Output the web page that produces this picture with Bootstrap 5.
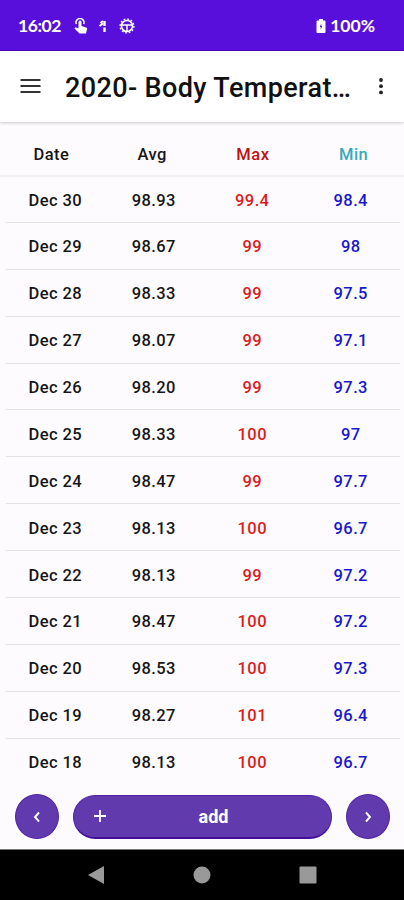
<!DOCTYPE html>
<html lang="en">
<head>
<meta charset="utf-8">
<meta name="viewport" content="width=device-width, initial-scale=1">
<title>2020- Body Temperature</title>
<link href="https://cdn.jsdelivr.net/npm/bootstrap@5.3.0/dist/css/bootstrap.min.css" rel="stylesheet">
<style>
body { font-family: Roboto, "Noto Sans", sans-serif; background: #fefbff; color: #161616; }
.screen { height: 900px; }
svg { display: block; flex: none; }
.status { height: 51px; background: #590fdc; border-bottom: 1px solid #4d07c2; font: 700 17.5px/1 Lato, sans-serif; padding: 2px 29px 0 18px; }
.status .clock { width: 56px; letter-spacing: -.4px; }
.appbar { height: 71px; padding: 0 16px 0 20px; box-shadow: 0 1px 3px rgba(0,0,0,.2); z-index: 1; }
.appbar h1 { font-size: 27px; font-weight: 500; line-height: 36px; width: 292px; margin-left: 24px; padding-top: 2px; letter-spacing: .38px; color: #111; }
.appbar svg { position: relative; top: -1px; }
.heads { height: 55px; padding: 13px 0 0 1px; border-bottom: 2px solid #f2eff3; font-size: 16.5px; font-weight: 500; letter-spacing: .5px; }
.readings { height: 609.3px; margin: -1px 4px 0 6px; font-size: 16.5px; font-weight: 500; letter-spacing: .4px; }
.reading { flex: 1 1 0; border-bottom: 1.5px solid #e5e2e6; padding-top: 4px; }
.reading:last-child { border-color: transparent; }
.high { color: #dc1c1c; } .low { color: #1717cf; }
.head-high { color: #bd1212; } .head-low { color: #38a9bf; }
.actions { padding: 0 14px 1px 15px; flex: 1; }
.fill { background: #613bae; color: #fff; }
.fill:hover { background: #57339e; color: #fff; }
.round { width: 44px; height: 45px; border: 1px solid #5022a6; }
.add { width: 259px; height: 44px; border: 1px solid #5022a6; border-bottom: 2px solid #430f99; font-size: 18px; font-weight: 700; padding: 0 19px; }
.sysbar { height: 51px; background: #000; border-top: 1px solid #777; padding: 0 87px 0 87px; }
</style>
</head>
<body>
<div class="screen d-flex flex-column overflow-hidden">
  <div class="status d-flex align-items-center text-white">
    <span class="clock">16:02</span>
    <svg width="14" height="16" viewBox="0 0 14 16" fill="#fff"><path d="M4.500 4a1.500 1.500 0 0 1 3 0v4l4.700 1.500c.8.3 1 .9.900 1.600L12 15.500H5.500L.5 10.500l1.200-1.200 2.800 1.200z"/><path d="M2.300 6a4 4 0 1 1 7.400 0" fill="none" stroke="#fff" stroke-width="1.500"/></svg>
    <svg class="ms-2" width="14" height="16" viewBox="0 0 14 16"><path d="M3.500 8L7 5.500M4.500 5l2.500-2" stroke="#fff" stroke-width="1.800"/><path d="M8.500 3v5M8.500 9.500v4.500" stroke="#fff" stroke-width="2.400"/></svg>
    <svg class="ms-2" width="18" height="18" viewBox="0 0 18 18" fill="none" stroke="#fff"><circle cx="9" cy="9" r="5.500" stroke-width="1.600"/><circle cx="9" cy="9" r="6.900" stroke-width="1.400" stroke-dasharray="1.800 1.810"/><path d="M4 8h10M9 8v6" stroke-width="1.500"/></svg>
    <svg class="ms-auto me-1" width="10" height="16" viewBox="0 0 10 16"><path d="M3 1h4v1.500h1.500Q9.500 2.500 9.500 3.500v10.500q0 1-1 1h-7q-1 0-1-1V3.500q0-1 1-1H3z" fill="#fff"/><path d="M5.300 5.500L3.700 9h1v2.500L6.300 8h-1z" fill="#590fdc"/></svg>
    <span>100%</span>
  </div>

  <header class="appbar d-flex align-items-center bg-white position-relative">
    <svg width="21" height="18" viewBox="0 0 21 18" stroke="#333" stroke-width="1.900"><path d="M.5 3h20M.5 9h20M.5 15h20"/></svg>
    <h1 class="mb-0 text-nowrap">2020- Body Temperat…</h1>
    <svg class="ms-auto" width="14" height="20" viewBox="0 0 14 20" fill="#222"><circle cx="7" cy="4" r="1.900"/><circle cx="7" cy="10.200" r="1.900"/><circle cx="7" cy="16.400" r="1.900"/></svg>
  </header>

  <div class="heads row g-0 align-items-center text-center">
    <div class="col">Date</div><div class="col">Avg</div><div class="col head-high">Max</div><div class="col head-low">Min</div>
  </div>

  <main class="readings d-flex flex-column text-center">
    <div class="reading row g-0 align-items-center"><div class="col">Dec 30</div><div class="col">98.93</div><div class="col high">99.4</div><div class="col low">98.4</div></div>
    <div class="reading row g-0 align-items-center"><div class="col">Dec 29</div><div class="col">98.67</div><div class="col high">99</div><div class="col low">98</div></div>
    <div class="reading row g-0 align-items-center"><div class="col">Dec 28</div><div class="col">98.33</div><div class="col high">99</div><div class="col low">97.5</div></div>
    <div class="reading row g-0 align-items-center"><div class="col">Dec 27</div><div class="col">98.07</div><div class="col high">99</div><div class="col low">97.1</div></div>
    <div class="reading row g-0 align-items-center"><div class="col">Dec 26</div><div class="col">98.20</div><div class="col high">99</div><div class="col low">97.3</div></div>
    <div class="reading row g-0 align-items-center"><div class="col">Dec 25</div><div class="col">98.33</div><div class="col high">100</div><div class="col low">97</div></div>
    <div class="reading row g-0 align-items-center"><div class="col">Dec 24</div><div class="col">98.47</div><div class="col high">99</div><div class="col low">97.7</div></div>
    <div class="reading row g-0 align-items-center"><div class="col">Dec 23</div><div class="col">98.13</div><div class="col high">100</div><div class="col low">96.7</div></div>
    <div class="reading row g-0 align-items-center"><div class="col">Dec 22</div><div class="col">98.13</div><div class="col high">99</div><div class="col low">97.2</div></div>
    <div class="reading row g-0 align-items-center"><div class="col">Dec 21</div><div class="col">98.47</div><div class="col high">100</div><div class="col low">97.2</div></div>
    <div class="reading row g-0 align-items-center"><div class="col">Dec 20</div><div class="col">98.53</div><div class="col high">100</div><div class="col low">97.3</div></div>
    <div class="reading row g-0 align-items-center"><div class="col">Dec 19</div><div class="col">98.27</div><div class="col high">101</div><div class="col low">96.4</div></div>
    <div class="reading row g-0 align-items-center"><div class="col">Dec 18</div><div class="col">98.13</div><div class="col high">100</div><div class="col low">96.7</div></div>
  </main>

  <div class="actions d-flex align-items-center justify-content-between">
    <button class="btn fill round rounded-circle p-0 d-flex align-items-center justify-content-center" aria-label="Previous"><svg width="10" height="12" viewBox="0 0 10 12"><path d="M7 1.500L3 6l4 4.500" fill="none" stroke="#fff" stroke-width="1.900"/></svg></button>
    <button class="btn fill add rounded-pill d-flex align-items-center"><svg width="14" height="14" viewBox="0 0 14 14"><path d="M7 1v12M1 7h12" stroke="#fff" stroke-width="1.800"/></svg><span class="flex-grow-1 ps-2">add</span></button>
    <button class="btn fill round rounded-circle p-0 d-flex align-items-center justify-content-center" aria-label="Next"><svg width="10" height="12" viewBox="0 0 10 12"><path d="M3 1.500L7 6l-4 4.500" fill="none" stroke="#fff" stroke-width="1.900"/></svg></button>
  </div>

  <nav class="sysbar d-flex align-items-center justify-content-between">
    <svg width="18" height="20" viewBox="0 0 18 20"><path d="M1 10L17 1v18z" fill="#999"/></svg>
    <svg width="18" height="18" viewBox="0 0 18 18"><circle cx="9" cy="9" r="8.500" fill="#999"/></svg>
    <svg width="18" height="18" viewBox="0 0 18 18"><rect x=".5" y=".5" width="17" height="17" rx="1" fill="#999"/></svg>
  </nav>
</div>
<script src="https://cdn.jsdelivr.net/npm/bootstrap@5.3.0/dist/js/bootstrap.bundle.min.js"></script>
</body>
</html>
